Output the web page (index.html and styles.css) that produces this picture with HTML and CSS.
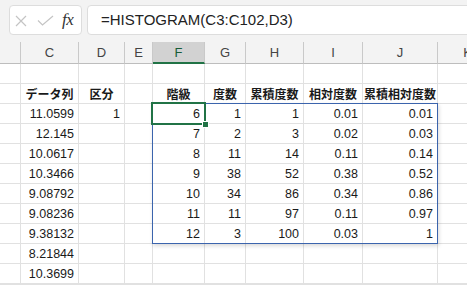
FILE: index.html
```html
<!DOCTYPE html>
<html lang="ja">
<head>
<meta charset="utf-8">
<link rel="stylesheet" href="styles.css">
</head>
<body>
<div class="toolbar">
  <div class="namebox">
    <svg class="ico-x" width="12" height="12" viewBox="0 0 12 12"><path d="M1 1L11 11M11 1L1 11" stroke="#c4c4c4" stroke-width="1.2" fill="none"/></svg>
    <svg class="ico-v" width="17" height="11" viewBox="0 0 17 11"><path d="M1 5.5L5.5 10L16 1" stroke="#c4c4c4" stroke-width="1.2" fill="none"/></svg>
    <span class="fx">fx</span>
  </div>
  <div class="formula">=HISTOGRAM(C3:C102,D3)</div>
</div>
<div class="sheet">
  <div class="c h"></div><div class="c h">C</div><div class="c h">D</div><div class="c h">E</div><div class="c h sel">F</div><div class="c h">G</div><div class="c h">H</div><div class="c h">I</div><div class="c h">J</div><div class="c h">K</div>

  <div class="c"></div><div class="c"></div><div class="c"></div><div class="c"></div><div class="c"></div><div class="c"></div><div class="c"></div><div class="c"></div><div class="c"></div><div class="c"></div>

  <div class="c"></div><div class="c lab">データ列</div><div class="c lab">区分</div><div class="c"></div><div class="c lab">階級</div><div class="c lab">度数</div><div class="c lab">累積度数</div><div class="c lab">相対度数</div><div class="c lab">累積相対度数</div><div class="c"></div>

  <div class="c"></div><div class="c">11.0599</div><div class="c">1</div><div class="c"></div><div class="c">6</div><div class="c">1</div><div class="c">1</div><div class="c">0.01</div><div class="c">0.01</div><div class="c"></div>
  <div class="c"></div><div class="c">12.145</div><div class="c"></div><div class="c"></div><div class="c">7</div><div class="c">2</div><div class="c">3</div><div class="c">0.02</div><div class="c">0.03</div><div class="c"></div>
  <div class="c"></div><div class="c">10.0617</div><div class="c"></div><div class="c"></div><div class="c">8</div><div class="c">11</div><div class="c">14</div><div class="c">0.11</div><div class="c">0.14</div><div class="c"></div>
  <div class="c"></div><div class="c">10.3466</div><div class="c"></div><div class="c"></div><div class="c">9</div><div class="c">38</div><div class="c">52</div><div class="c">0.38</div><div class="c">0.52</div><div class="c"></div>
  <div class="c"></div><div class="c">9.08792</div><div class="c"></div><div class="c"></div><div class="c">10</div><div class="c">34</div><div class="c">86</div><div class="c">0.34</div><div class="c">0.86</div><div class="c"></div>
  <div class="c"></div><div class="c">9.08236</div><div class="c"></div><div class="c"></div><div class="c">11</div><div class="c">11</div><div class="c">97</div><div class="c">0.11</div><div class="c">0.97</div><div class="c"></div>
  <div class="c"></div><div class="c">9.38132</div><div class="c"></div><div class="c"></div><div class="c">12</div><div class="c">3</div><div class="c">100</div><div class="c">0.03</div><div class="c">1</div><div class="c"></div>
  <div class="c"></div><div class="c">8.21844</div><div class="c"></div><div class="c"></div><div class="c"></div><div class="c"></div><div class="c"></div><div class="c"></div><div class="c"></div><div class="c"></div>
  <div class="c"></div><div class="c">10.3699</div><div class="c"></div><div class="c"></div><div class="c"></div><div class="c"></div><div class="c"></div><div class="c"></div><div class="c"></div><div class="c"></div>
  <div class="c"></div><div class="c"></div><div class="c"></div><div class="c"></div><div class="c"></div><div class="c"></div><div class="c"></div><div class="c"></div><div class="c"></div><div class="c"></div>

  <div class="spill"></div>
  <div class="cursor"><span class="handle"></span></div>
</div>
</body>
</html>
```

FILE: styles.css
```css
html, body {
  margin: 0;
  padding: 0;
}
body {
  width: 467px;
  height: 285px;
  overflow: hidden;
  background: #ffffff;
  font-family: "Liberation Sans", Arial, "Noto Sans CJK JP", sans-serif;
  color: #1a1a1a;
}
.toolbar {
  box-sizing: border-box;
  height: 42px;
  background: #f3f3f3;
  display: flex;
  align-items: flex-start;
  padding: 5px 0 0 9px;
  gap: 5px;
  overflow: hidden;
}
.namebox {
  box-sizing: border-box;
  width: 73px;
  height: 30px;
  flex: none;
  background: #fff;
  border: 1px solid #dddddd;
  border-radius: 4px;
  display: flex;
  align-items: center;
  padding-left: 5px;
}
.ico-x {
  margin-top: 2px;
}
.ico-v {
  margin-left: 10px;
  margin-top: 1px;
}
.fx {
  margin-left: 8px;
  font-family: "Liberation Serif", "Times New Roman", serif;
  font-style: italic;
  font-size: 17px;
  color: #333;
  letter-spacing: -0.5px;
}
.formula {
  box-sizing: border-box;
  flex: 1;
  height: 30px;
  margin-right: -10px;
  background: #fff;
  border: 1px solid #dddddd;
  border-radius: 4px;
  padding-left: 13px;
  font-size: 15px;
  line-height: 28px;
  color: #222;
}
.sheet {
  display: grid;
  grid-template-columns: 21px 58px 46px 28px 52px 41px 58px 59px 75px 60px;
  grid-template-rows: 22px repeat(11, 20px);
  position: relative;
}
.c {
  box-sizing: border-box;
  border-right: 1px solid #e1e1e1;
  border-bottom: 1px solid #e1e1e1;
  display: flex;
  align-items: center;
  justify-content: flex-end;
  padding-right: 4px;
  font-size: 12.5px;
  white-space: nowrap;
  overflow: hidden;
}
.h {
  background: #f3f3f3;
  border-right-color: #c9c9c9;
  border-bottom-color: #bdbdbd;
  justify-content: center;
  padding: 0;
  font-size: 13px;
  color: #444;
}
.h.sel {
  background: #d2d2d2;
  border-bottom: 2px solid #217346;
  color: #185c37;
}
.lab {
  justify-content: center;
  padding: 0;
  font-family: "Noto Sans CJK JP", sans-serif;
  font-weight: bold;
  font-size: 12px;
}
.spill {
  grid-column: 5 / 10;
  grid-row: 4 / 11;
  position: absolute;
  top: -1px;
  left: -1px;
  right: 0;
  bottom: 0;
  border: 1px solid #3b64ad;
  box-shadow: 1px 2px 4px rgba(0, 0, 0, 0.15);
  pointer-events: none;
}
.cursor {
  grid-column: 5 / 6;
  grid-row: 4 / 5;
  position: absolute;
  top: -2px;
  left: -2px;
  right: -1px;
  bottom: -1px;
  border: 2px solid #217346;
  pointer-events: none;
}
.handle {
  position: absolute;
  right: -5px;
  bottom: -5px;
  width: 5px;
  height: 5px;
  background: #217346;
  border: 1px solid #fff;
}
```
